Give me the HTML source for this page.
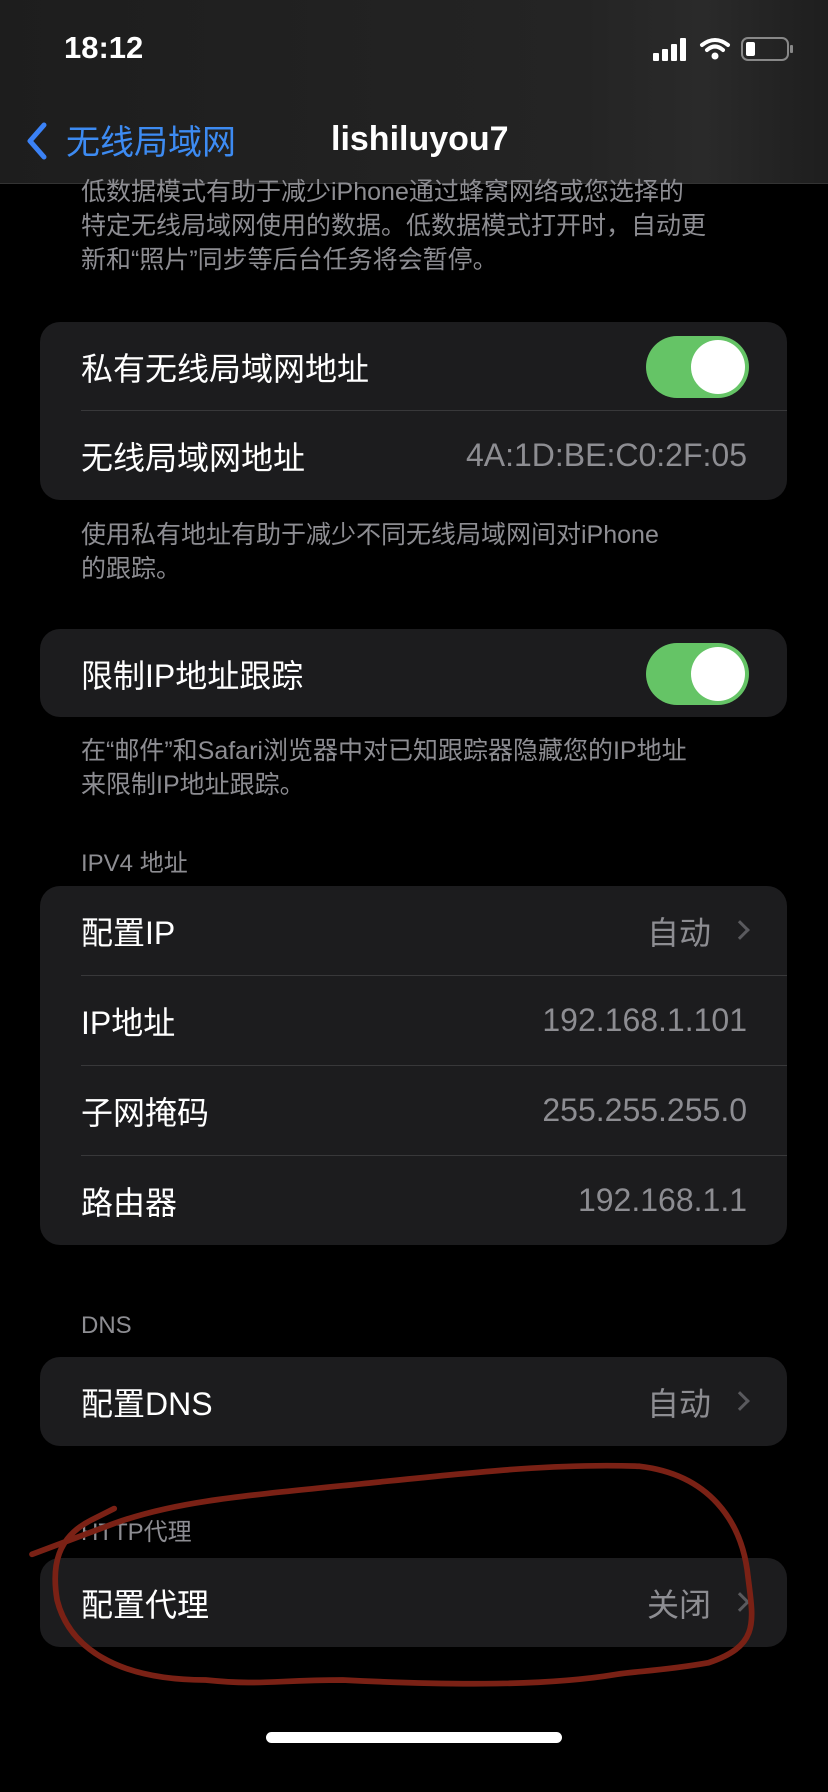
<!DOCTYPE html>
<html><head><meta charset="utf-8"><style>
*{margin:0;padding:0;box-sizing:border-box}
body{width:828px;height:1792px;background:#000;position:relative;overflow:hidden;font-family:"Liberation Sans","Noto Sans CJK SC",sans-serif;color:#fff}
.abs{position:absolute}
.nav{left:0;top:0;width:828px;height:184px;background:linear-gradient(90deg,#1d1d1d,#242424 70%,#2a2a2a 85%,#1e1e1e);border-bottom:1px solid #333}
.foot{left:81px;font-size:25px;color:#8d8d92;line-height:34px;width:700px}
.card{left:40px;width:747px;background:#1c1c1e;border-radius:20px}
.row{position:absolute;left:0;width:747px;height:89px;display:flex;align-items:center;padding-left:41px;font-size:32px}
.val{position:absolute;right:40px;color:#8d8d92;font-size:32px}
.valc{position:absolute;right:76px;color:#8d8d92;font-size:32px}
.chev{position:absolute;right:40px;top:50%;width:14px;height:14px;margin-top:-8px;border-right:3px solid #5a5a5e;border-top:3px solid #5a5a5e;transform:rotate(45deg)}
.sep{position:absolute;left:41px;right:0;height:1px;background:#38383a}
.tog{position:absolute;right:38px;width:103px;height:62px;border-radius:31px;background:#65c466}
.tog::after{content:"";position:absolute;right:4px;top:4px;width:54px;height:54px;border-radius:50%;background:#fff}
.hdr{left:81px;font-size:24px;color:#8d8d92}
</style></head><body>
<div class="abs nav"></div>
<div class="abs" style="left:64px;top:30px;font-size:31px;font-weight:bold">18:12</div>
<svg class="abs" style="left:650px;top:36px" width="145" height="26" viewBox="0 0 145 26">
<rect x="3" y="17" width="6" height="8" rx="1" fill="#fff"/><rect x="12" y="13" width="6" height="12" rx="1" fill="#fff"/><rect x="21" y="8" width="6" height="17" rx="1" fill="#fff"/><rect x="30" y="2" width="6" height="23" rx="1" fill="#fff"/>
<path d="M52 9 Q65 -1 78 9" stroke="#fff" stroke-width="4" fill="none" stroke-linecap="round"/><path d="M57 14 Q65 7 73 14" stroke="#fff" stroke-width="4" fill="none" stroke-linecap="round"/><circle cx="65" cy="20" r="3.5" fill="#fff"/>
<rect x="92" y="2" width="46" height="22" rx="6" fill="none" stroke="#888" stroke-width="2"/><rect x="96" y="6" width="9" height="14" rx="2" fill="#fff"/><rect x="140" y="9" width="3" height="8" rx="1" fill="#888"/>
</svg>
<svg class="abs" style="left:24px;top:121px" width="26" height="40" viewBox="0 0 26 40"><path d="M20 4 L6 20 L20 36" stroke="#3b82f6" stroke-width="5" fill="none" stroke-linecap="round" stroke-linejoin="round"/></svg>
<div class="abs" style="left:66px;top:115px;font-size:34px;color:#3d8bf2">无线局域网</div>
<div class="abs" style="left:331px;top:120px;font-size:34px;font-weight:bold">lishiluyou7</div>

<div class="abs foot" style="top:175px">低数据模式有助于减少iPhone通过蜂窝网络或您选择的<br>特定无线局域网使用的数据。低数据模式打开时，自动更<br>新和“照片”同步等后台任务将会暂停。</div>

<div class="abs card" style="top:322px;height:178px">
<div class="row" style="top:0">私有无线局域网地址<div class="tog"></div></div>
<div class="sep" style="top:88px"></div>
<div class="row" style="top:89px">无线局域网地址<span class="val">4A:1D:BE:C0:2F:05</span></div>
</div>
<div class="abs foot" style="top:518px">使用私有地址有助于减少不同无线局域网间对iPhone<br>的跟踪。</div>

<div class="abs card" style="top:629px;height:88px">
<div class="row" style="top:0">限制IP地址跟踪<div class="tog"></div></div>
</div>
<div class="abs foot" style="top:734px">在“邮件”和Safari浏览器中对已知跟踪器隐藏您的IP地址<br>来限制IP地址跟踪。</div>

<div class="abs hdr" style="top:843px">IPV4 地址</div>
<div class="abs card" style="top:886px;height:359px">
<div class="row" style="top:0">配置IP<span class="valc">自动</span><span class="chev"></span></div>
<div class="sep" style="top:89px"></div>
<div class="row" style="top:90px">IP地址<span class="val">192.168.1.101</span></div>
<div class="sep" style="top:179px"></div>
<div class="row" style="top:180px">子网掩码<span class="val">255.255.255.0</span></div>
<div class="sep" style="top:269px"></div>
<div class="row" style="top:270px">路由器<span class="val">192.168.1.1</span></div>
</div>

<div class="abs hdr" style="top:1312px">DNS</div>
<div class="abs card" style="top:1357px;height:89px">
<div class="row" style="top:0">配置DNS<span class="valc">自动</span><span class="chev"></span></div>
</div>

<div class="abs hdr" style="top:1512px">HTTP代理</div>
<div class="abs card" style="top:1558px;height:89px">
<div class="row" style="top:0">配置代理<span class="valc">关闭</span><span class="chev"></span></div>
</div>

<div class="abs" style="left:266px;top:1732px;width:296px;height:11px;border-radius:6px;background:#fff"></div>

<svg class="abs" style="left:0;top:0" width="828" height="1792" viewBox="0 0 725 1568" preserveAspectRatio="none">
<path d="M28,1360 L100,1333 C150,1315 200,1310 300,1300 C400,1290 480,1280 560,1283 C620,1290 650,1330 655,1380 C660,1420 665,1440 620,1455 C580,1462 560,1462 540,1465 C480,1475 400,1475 300,1470 C240,1470 230,1475 180,1470 C100,1470 60,1440 50,1400 C45,1370 50,1345 80,1330 L100,1320" stroke="#7a2115" stroke-width="5" fill="none" stroke-linecap="round" stroke-linejoin="round"/>
</svg>
</body></html>
